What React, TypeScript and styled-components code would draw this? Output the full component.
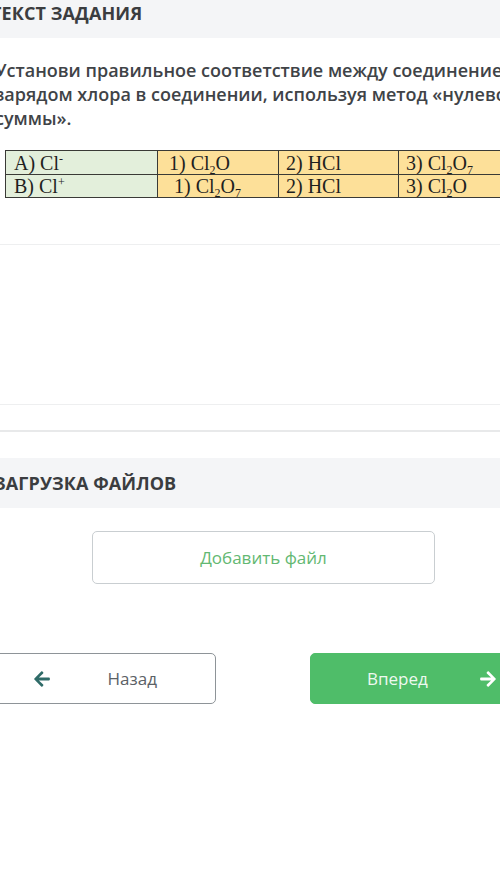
import React from "react";
import styled, { createGlobalStyle } from "styled-components";
import { FaArrowLeft, FaArrowRight } from "react-icons/fa";

const GlobalStyle = createGlobalStyle`
  html, body {
    margin: 0;
    padding: 0;
    background: #ffffff;
    overflow: hidden;
  }
  body {
    font-family: "Open Sans", "Noto Sans", sans-serif;
  }
`;

const Page = styled.div`
  margin: -12px 0 0 -37px;
  width: 600px;
  display: flex;
  flex-direction: column;
`;

const SectionHeader = styled.div<{ $indent: number }>`
  height: 50px;
  background: #f4f5f7;
  display: flex;
  align-items: center;
  padding-left: ${(p) => p.$indent}px;
  font-size: 18px;
  font-weight: 700;
  color: #3b3d40;
  letter-spacing: 0.1px;
  white-space: nowrap;
`;

const Question = styled.div`
  margin-top: 20px;
  padding-left: 32px;
  font-size: 18px;
  line-height: 24px;
  font-weight: 600;
  color: #404347;
  white-space: nowrap;
`;

const Table = styled.table`
  margin: 20px 0 0 42px;
  width: 517px;
  border-collapse: collapse;
  font-family: "Liberation Serif", "Times New Roman", serif;
  font-size: 20px;
  color: #1f1f1f;
  table-layout: fixed;
`;

const Row = styled.tr<{ $h: number }>`
  height: ${(p) => p.$h}px;
`;

const Cell = styled.td<{ $tone: "green" | "orange"; $pad: number }>`
  padding: 0 0 0 ${(p) => p.$pad}px;
  line-height: 20px;
  border: 1.5px solid #3a3a36;
  background: ${(p) => (p.$tone === "green" ? "#e3efdb" : "#fde099")};
  white-space: nowrap;
  overflow: hidden;
  vertical-align: middle;
  sub, sup {
    font-size: 12px;
    line-height: 0;
  }
  sub {
    vertical-align: -4px;
  }
  sup {
    vertical-align: 7px;
  }
`;

const AnswerArea = styled.div`
  margin-top: 46px;
  height: 159px;
  border-top: 1px solid #eeeff0;
  border-bottom: 1px solid #eeeff0;
`;

const Divider = styled.div`
  margin-top: 25px;
  height: 2px;
  background: #e8e9ea;
`;

const UploadHeaderWrap = styled.div`
  margin-top: 26px;
`;

const AddFileButton = styled.button`
  margin: 23px 0 0 129px;
  width: 343px;
  height: 53px;
  border: 1px solid #c9ced1;
  border-radius: 5px;
  background: #ffffff;
  color: #63b872;
  font-family: "Open Sans", "Noto Sans", sans-serif;
  font-size: 17px;
  font-weight: 400;
  cursor: pointer;
  padding: 0;
`;

const NavRow = styled.div`
  margin-top: 69px;
  padding: 0 7px;
  display: flex;
  justify-content: space-between;
`;

const NavButton = styled.button<{ $primary?: boolean }>`
  width: 246px;
  height: 51px;
  box-sizing: border-box;
  border-radius: 5px;
  border: 1px solid ${(p) => (p.$primary ? "#4fbd69" : "#8e9498")};
  background: ${(p) => (p.$primary ? "#4fbd69" : "#ffffff")};
  color: ${(p) => (p.$primary ? "#eef9f0" : "#5b6166")};
  font-family: "Open Sans", "Noto Sans", sans-serif;
  font-size: 17px;
  display: flex;
  align-items: center;
  justify-content: space-between;
  padding: 0 58px 0 ${(p) => (p.$primary ? 56 : 62)}px;
  cursor: pointer;
`;

const ArrowIcon = styled.span<{ $color: string }>`
  display: flex;
  align-items: center;
  color: ${(p) => p.$color};
  font-size: 18px;
`;

const rows = [
  {
    h: 24,
    label: (
      <>
        A) Cl<sup>-</sup>
      </>
    ),
    pad: 11,
    items: [
      <>
        1) Cl<sub>2</sub>O
      </>,
      <>2) HCl</>,
      <>
        3) Cl<sub>2</sub>O<sub>7</sub>
      </>,
    ],
  },
  {
    h: 23,
    label: (
      <>
        B) Cl<sup>+</sup>
      </>
    ),
    pad: 16,
    items: [
      <>
        1) Cl<sub>2</sub>O<sub>7</sub>
      </>,
      <>2) HCl</>,
      <>
        3) Cl<sub>2</sub>O
      </>,
    ],
  },
];

const colWidths = [152, 121, 120, 124];

export default function App() {
  return (
    <>
      <GlobalStyle />
      <Page>
        <SectionHeader $indent={28}>ТЕКСТ ЗАДАНИЯ</SectionHeader>
        <Question>
          Установи правильное соответствие между соединением и
          <br />
          зарядом хлора в соединении, используя метод «нулевой
          <br />
          суммы».
        </Question>
        <Table>
          <colgroup>
            {colWidths.map((w, i) => (
              <col key={i} style={{ width: w }} />
            ))}
          </colgroup>
          <tbody>
            {rows.map((r, i) => (
              <Row key={i} $h={r.h}>
                <Cell $tone="green" $pad={8}>
                  {r.label}
                </Cell>
                {r.items.map((it, j) => (
                  <Cell key={j} $tone="orange" $pad={j === 0 ? r.pad : 7}>
                    {it}
                  </Cell>
                ))}
              </Row>
            ))}
          </tbody>
        </Table>
        <AnswerArea />
        <Divider />
        <UploadHeaderWrap>
          <SectionHeader $indent={31}>ЗАГРУЗКА ФАЙЛОВ</SectionHeader>
        </UploadHeaderWrap>
        <AddFileButton>Добавить файл</AddFileButton>
        <NavRow>
          <NavButton>
            <ArrowIcon $color="#2f6b68">
              <FaArrowLeft />
            </ArrowIcon>
            <span>Назад</span>
          </NavButton>
          <NavButton $primary>
            <span>Вперед</span>
            <ArrowIcon $color="#ffffff">
              <FaArrowRight />
            </ArrowIcon>
          </NavButton>
        </NavRow>
      </Page>
    </>
  );
}
